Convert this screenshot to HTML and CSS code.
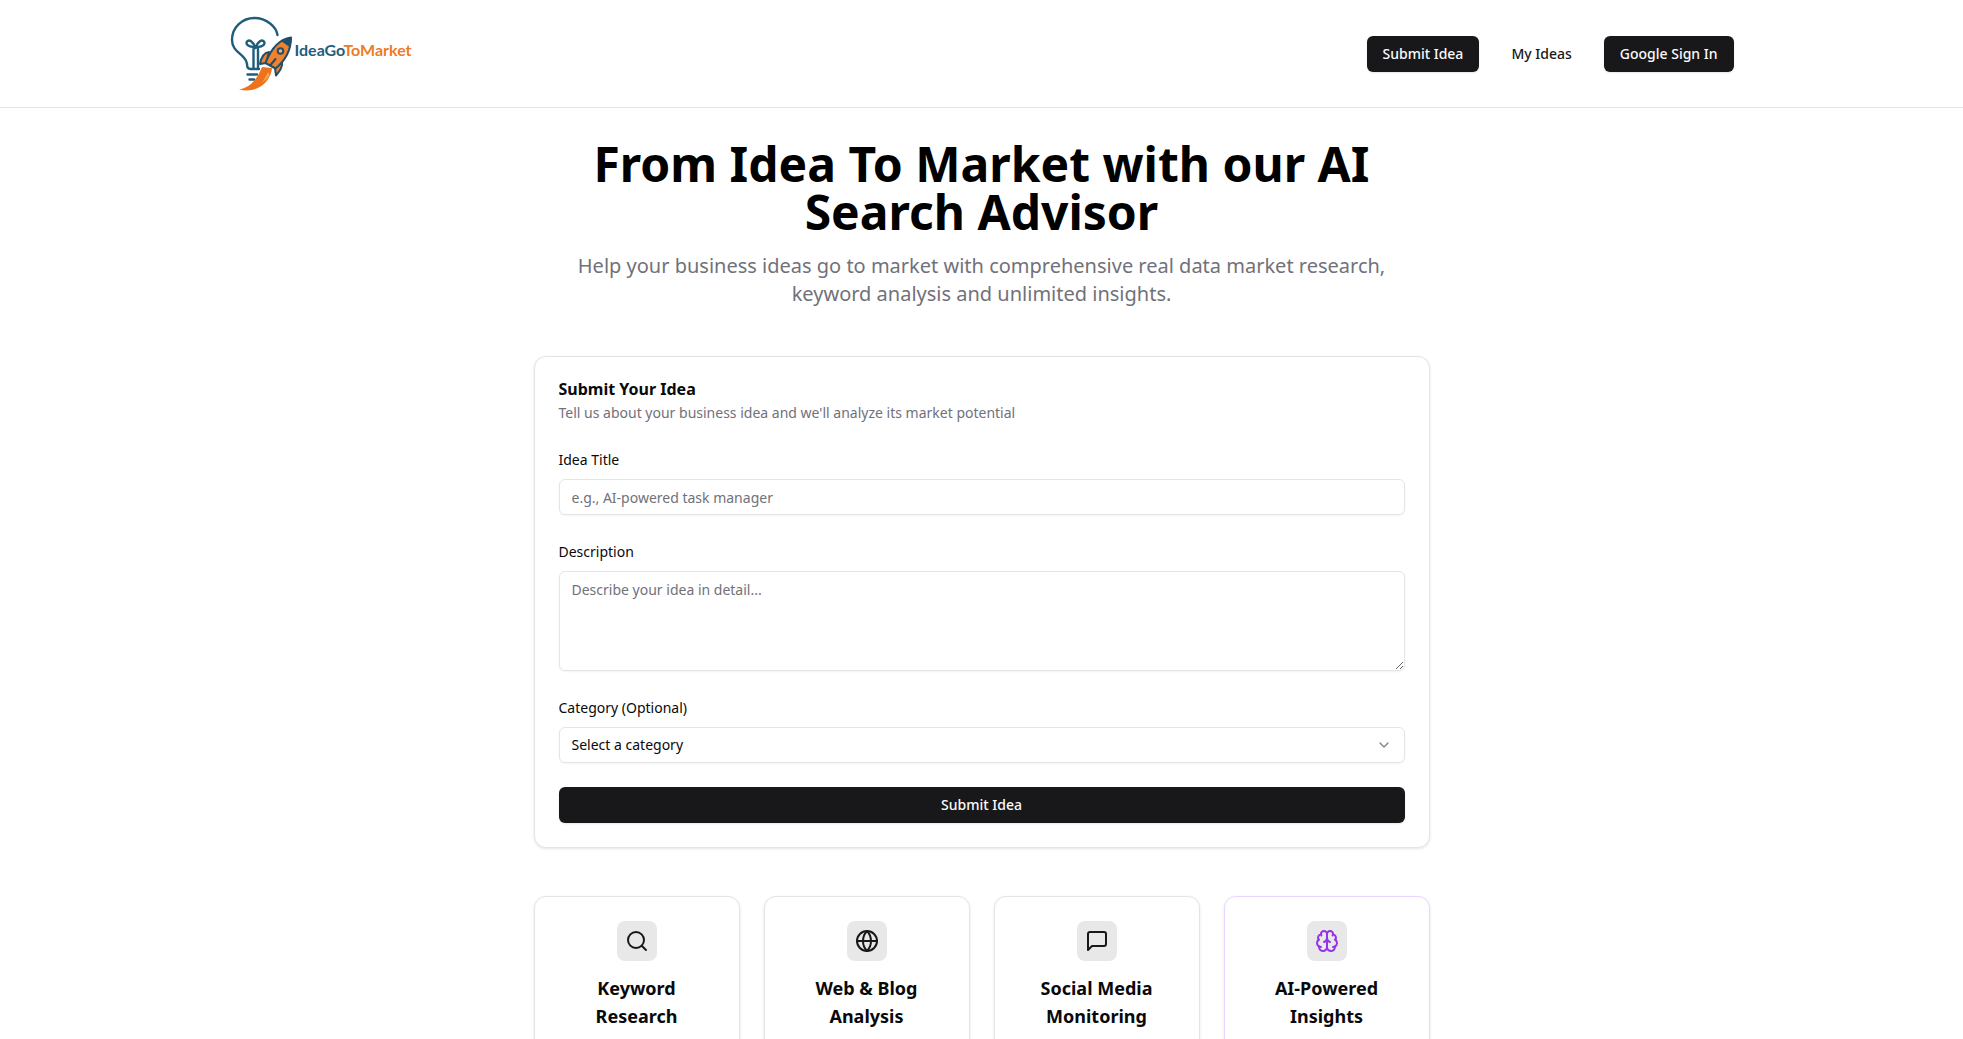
FILE: index.html
```html
<!DOCTYPE html>
<html lang="en">
<head>
<meta charset="utf-8">
<meta name="viewport" content="width=device-width, initial-scale=1">
<title>IdeaGoToMarket</title>
<link rel="stylesheet" href="styles.css">
</head>
<body>
<header class="site-header">
  <div class="header-inner">
    <a class="logo" href="#" aria-label="IdeaGoToMarket home">
      <svg class="logo-mark" viewBox="0 0 65 75" width="65" height="75" fill="none" aria-hidden="true">
        <g stroke="#1f5d7d" stroke-width="2.4" stroke-linecap="round" stroke-linejoin="round">
          <path d="M17 48C16 38 2 37 2 24C2 11 12.500 2 24.500 2C36.500 2 46.500 11 47.500 19"/>
          <path d="M17 48C17 51 18 53 20.500 53H29"/>
          <path d="M23.500 52V31C18 31 15.500 28 17 25.500C19 23 23 25 25.500 32C28 25 32 23 34 25.500C35.500 28 33 31 28 31V52"/>
          <path d="M17.500 58.500H27M19.500 63.500H24"/>
        </g>
        <path fill="#f0711c" d="M42 52C41 66 27 78 9 73.500C20 71 27 64 32 51Z"/>
        <path fill="#f9a04c" d="M38 56L32 67L40 60Z"/>
        <g fill="#f0822e" stroke="#1f4f6c" stroke-width="2" stroke-linejoin="round">
          <path d="M39 36C33 37 31 42 30 48L36 47Z"/>
          <path d="M52 44C53 51 50 55 46 59.500L45 52Z"/>
          <path d="M61 21.500C51 23 42 30 35.500 47L45.500 52.500C56 44 61 33 61 21.500Z"/>
        </g>
        <path fill="#1f4f6c" d="M61.500 21C57 21.500 54 23 51 25L59.500 31C61.500 27 61.500 24 61.500 21Z"/>
        <circle cx="50.500" cy="35" r="2.800" fill="#f6b27c" stroke="#1f4f6c" stroke-width="2"/>
        <path d="M45.500 43L40.500 49" stroke="#1f4f6c" stroke-width="2" stroke-linecap="round"/>
      </svg>
      <span class="logo-text">IdeaGo<span class="logo-accent">ToMarket</span></span>
    </a>
    <nav class="nav">
      <button class="btn btn-primary" type="button">Submit Idea</button>
      <a class="btn btn-ghost" href="#">My Ideas</a>
      <button class="btn btn-primary" type="button">Google Sign In</button>
    </nav>
  </div>
</header>
<main class="main">
  <section class="hero">
    <h1 class="hero-title">From Idea To Market with our AI Search Advisor</h1>
    <p class="hero-text">Help your business ideas go to market with comprehensive real data market research, keyword analysis and unlimited insights.</p>
  </section>
  <section class="card form-card">
    <div class="card-header">
      <h2 class="card-title">Submit Your Idea</h2>
      <p class="card-text">Tell us about your business idea and we'll analyze its market potential</p>
    </div>
    <form class="form">
      <div class="field">
        <label class="label" for="title">Idea Title</label>
        <input class="control" id="title" type="text" placeholder="e.g., AI-powered task manager">
      </div>
      <div class="field">
        <label class="label" for="description">Description</label>
        <textarea class="control control-area" id="description" placeholder="Describe your idea in detail..."></textarea>
      </div>
      <div class="field">
        <label class="label" for="category">Category (Optional)</label>
        <div class="select-wrap">
          <select class="control" id="category"><option>Select a category</option></select>
          <svg class="chevron" viewBox="0 0 24 24" aria-hidden="true"><path d="m6 9 6 6 6-6"/></svg>
        </div>
      </div>
      <button class="btn btn-primary" type="submit">Submit Idea</button>
    </form>
  </section>
  <section class="features">
    <article class="card feature">
      <span class="feature-icon"><svg class="icon" viewBox="0 0 24 24" aria-hidden="true"><circle cx="11" cy="11" r="8"/><path d="m21 21-4.300-4.300"/></svg></span>
      <h3 class="feature-title">Keyword Research</h3>
    </article>
    <article class="card feature">
      <span class="feature-icon"><svg class="icon" viewBox="0 0 24 24" aria-hidden="true"><circle cx="12" cy="12" r="10"/><path d="M12 2a14.500 14.500 0 0 0 0 20 14.500 14.500 0 0 0 0-20"/><path d="M2 12h20"/></svg></span>
      <h3 class="feature-title">Web &amp; Blog Analysis</h3>
    </article>
    <article class="card feature">
      <span class="feature-icon"><svg class="icon" viewBox="0 0 24 24" aria-hidden="true"><path d="M21 15a2 2 0 0 1-2 2H7l-4 4V5a2 2 0 0 1 2-2h14a2 2 0 0 1 2 2z"/></svg></span>
      <h3 class="feature-title">Social Media Monitoring</h3>
    </article>
    <article class="card feature feature-ai">
      <span class="feature-icon"><svg class="icon" viewBox="0 0 24 24" aria-hidden="true"><path d="M12 5a3 3 0 1 0-5.997.125 4 4 0 0 0-2.526 5.770 4 4 0 0 0 .556 6.588A4 4 0 1 0 12 18Z"/><path d="M12 5a3 3 0 1 1 5.997.125 4 4 0 0 1 2.526 5.770 4 4 0 0 1-.556 6.588A4 4 0 1 1 12 18Z"/><path d="M15 13a4.500 4.500 0 0 1-3-4 4.500 4.500 0 0 1-3 4"/><path d="M17.599 6.500a3 3 0 0 0 .399-1.375"/><path d="M6.003 5.125A3 3 0 0 0 6.401 6.500"/><path d="M3.477 10.896a4 4 0 0 1 .585-.396"/><path d="M19.938 10.500a4 4 0 0 1 .585.396"/><path d="M6 18a4 4 0 0 1-1.967-.516"/><path d="M19.967 17.484A4 4 0 0 1 18 18"/></svg></span>
      <h3 class="feature-title">AI-Powered Insights</h3>
    </article>
  </section>
</main>
</body>
</html>
```
FILE: styles.css
```css
* { box-sizing: border-box; }

body {
  margin: 0;
  background: #fff;
  color: #09090b;
  font-family: "Noto Sans", "Open Sans", sans-serif;
  font-size: 14px;
  line-height: 20px;
}

h1, h2, h3, p { margin: 0; }

.site-header { border-bottom: 1px solid #e4e4e7; }

.header-inner {
  display: flex;
  align-items: center;
  justify-content: space-between;
  max-width: 1536px;
  margin: 0 auto;
  padding: 16px;
}

.logo {
  display: flex;
  align-items: center;
  text-decoration: none;
}

.logo-mark { flex: none; }

.logo-text {
  padding-bottom: 8px;
  color: #1f5d7d;
  font-family: Lato, sans-serif;
  font-size: 16px;
  font-weight: 700;
}

.logo-accent { color: #ee7b26; }

.nav { display: flex; gap: 16px; }

.btn {
  display: flex;
  align-items: center;
  justify-content: center;
  height: 36px;
  padding: 0 16px;
  border: 0;
  border-radius: 6px;
  font: inherit;
  text-decoration: none;
}

.btn-primary {
  background: #18181b;
  color: #fafafa;
  font-weight: 500;
  box-shadow: 0 1px 2px rgba(0, 0, 0, 0.1);
}

.btn-ghost { color: #18181b; font-weight: 500; }

.main {
  display: flex;
  flex-direction: column;
  gap: 48px;
  max-width: 928px;
  margin: 0 auto;
  padding: 32px 16px;
}

.hero {
  display: flex;
  flex-direction: column;
  gap: 16px;
  padding: 0 24px;
  text-align: center;
}

.hero-title {
  color: #000;
  font-size: 48px;
  font-weight: 700;
  line-height: 48px;
}

.hero-text {
  color: #71717a;
  font-size: 20px;
  line-height: 28px;
}

.card {
  padding: 24px;
  border: 1px solid #e4e4e7;
  border-radius: 12px;
  background: #fff;
  box-shadow: 0 1px 3px rgba(0, 0, 0, 0.1);
}

.form-card {
  display: flex;
  flex-direction: column;
  gap: 24px;
}

.card-header {
  display: flex;
  flex-direction: column;
  gap: 6px;
}

.card-title {
  font-size: 16px;
  font-weight: 700;
  line-height: 16px;
}

.card-text { color: #71717a; }

.form {
  display: flex;
  flex-direction: column;
  gap: 24px;
}

.field {
  display: flex;
  flex-direction: column;
  gap: 6px;
}

.label { line-height: 26px; }

.control {
  display: block;
  width: 100%;
  height: 36px;
  padding: 0 12px;
  border: 1px solid #e4e4e7;
  border-radius: 6px;
  background: transparent;
  color: inherit;
  font: inherit;
  box-shadow: 0 1px 2px rgba(0, 0, 0, 0.05);
  appearance: none;
}

.control::placeholder { color: #71717a; opacity: 1; }

.control-area {
  height: 100px;
  padding: 8px 12px;
  resize: vertical;
}

.select-wrap { position: relative; }

.chevron {
  position: absolute;
  top: 10px;
  right: 13px;
  width: 16px;
  height: 16px;
  fill: none;
  stroke: #09090b;
  stroke-width: 2;
  stroke-linecap: round;
  stroke-linejoin: round;
  opacity: 0.5;
  pointer-events: none;
}

.features {
  display: grid;
  grid-template-columns: repeat(4, 1fr);
  gap: 24px;
}

.feature {
  display: flex;
  flex-direction: column;
  align-items: center;
  gap: 13px;
  text-align: center;
}

.feature-ai { border-color: #e9d5ff; }

.feature-icon {
  display: grid;
  place-items: center;
  width: 40px;
  height: 40px;
  border-radius: 8px;
  background: #e8e8e8;
}

.icon {
  width: 24px;
  height: 24px;
  fill: none;
  stroke: #18181b;
  stroke-width: 2;
  stroke-linecap: round;
  stroke-linejoin: round;
}

.feature-ai .icon { stroke: #9333ea; }

.feature-title {
  width: 120px;
  font-size: 18px;
  font-weight: 700;
  line-height: 28px;
}

@media (max-width: 800px) {
  .features { grid-template-columns: repeat(2, 1fr); }
}
```
